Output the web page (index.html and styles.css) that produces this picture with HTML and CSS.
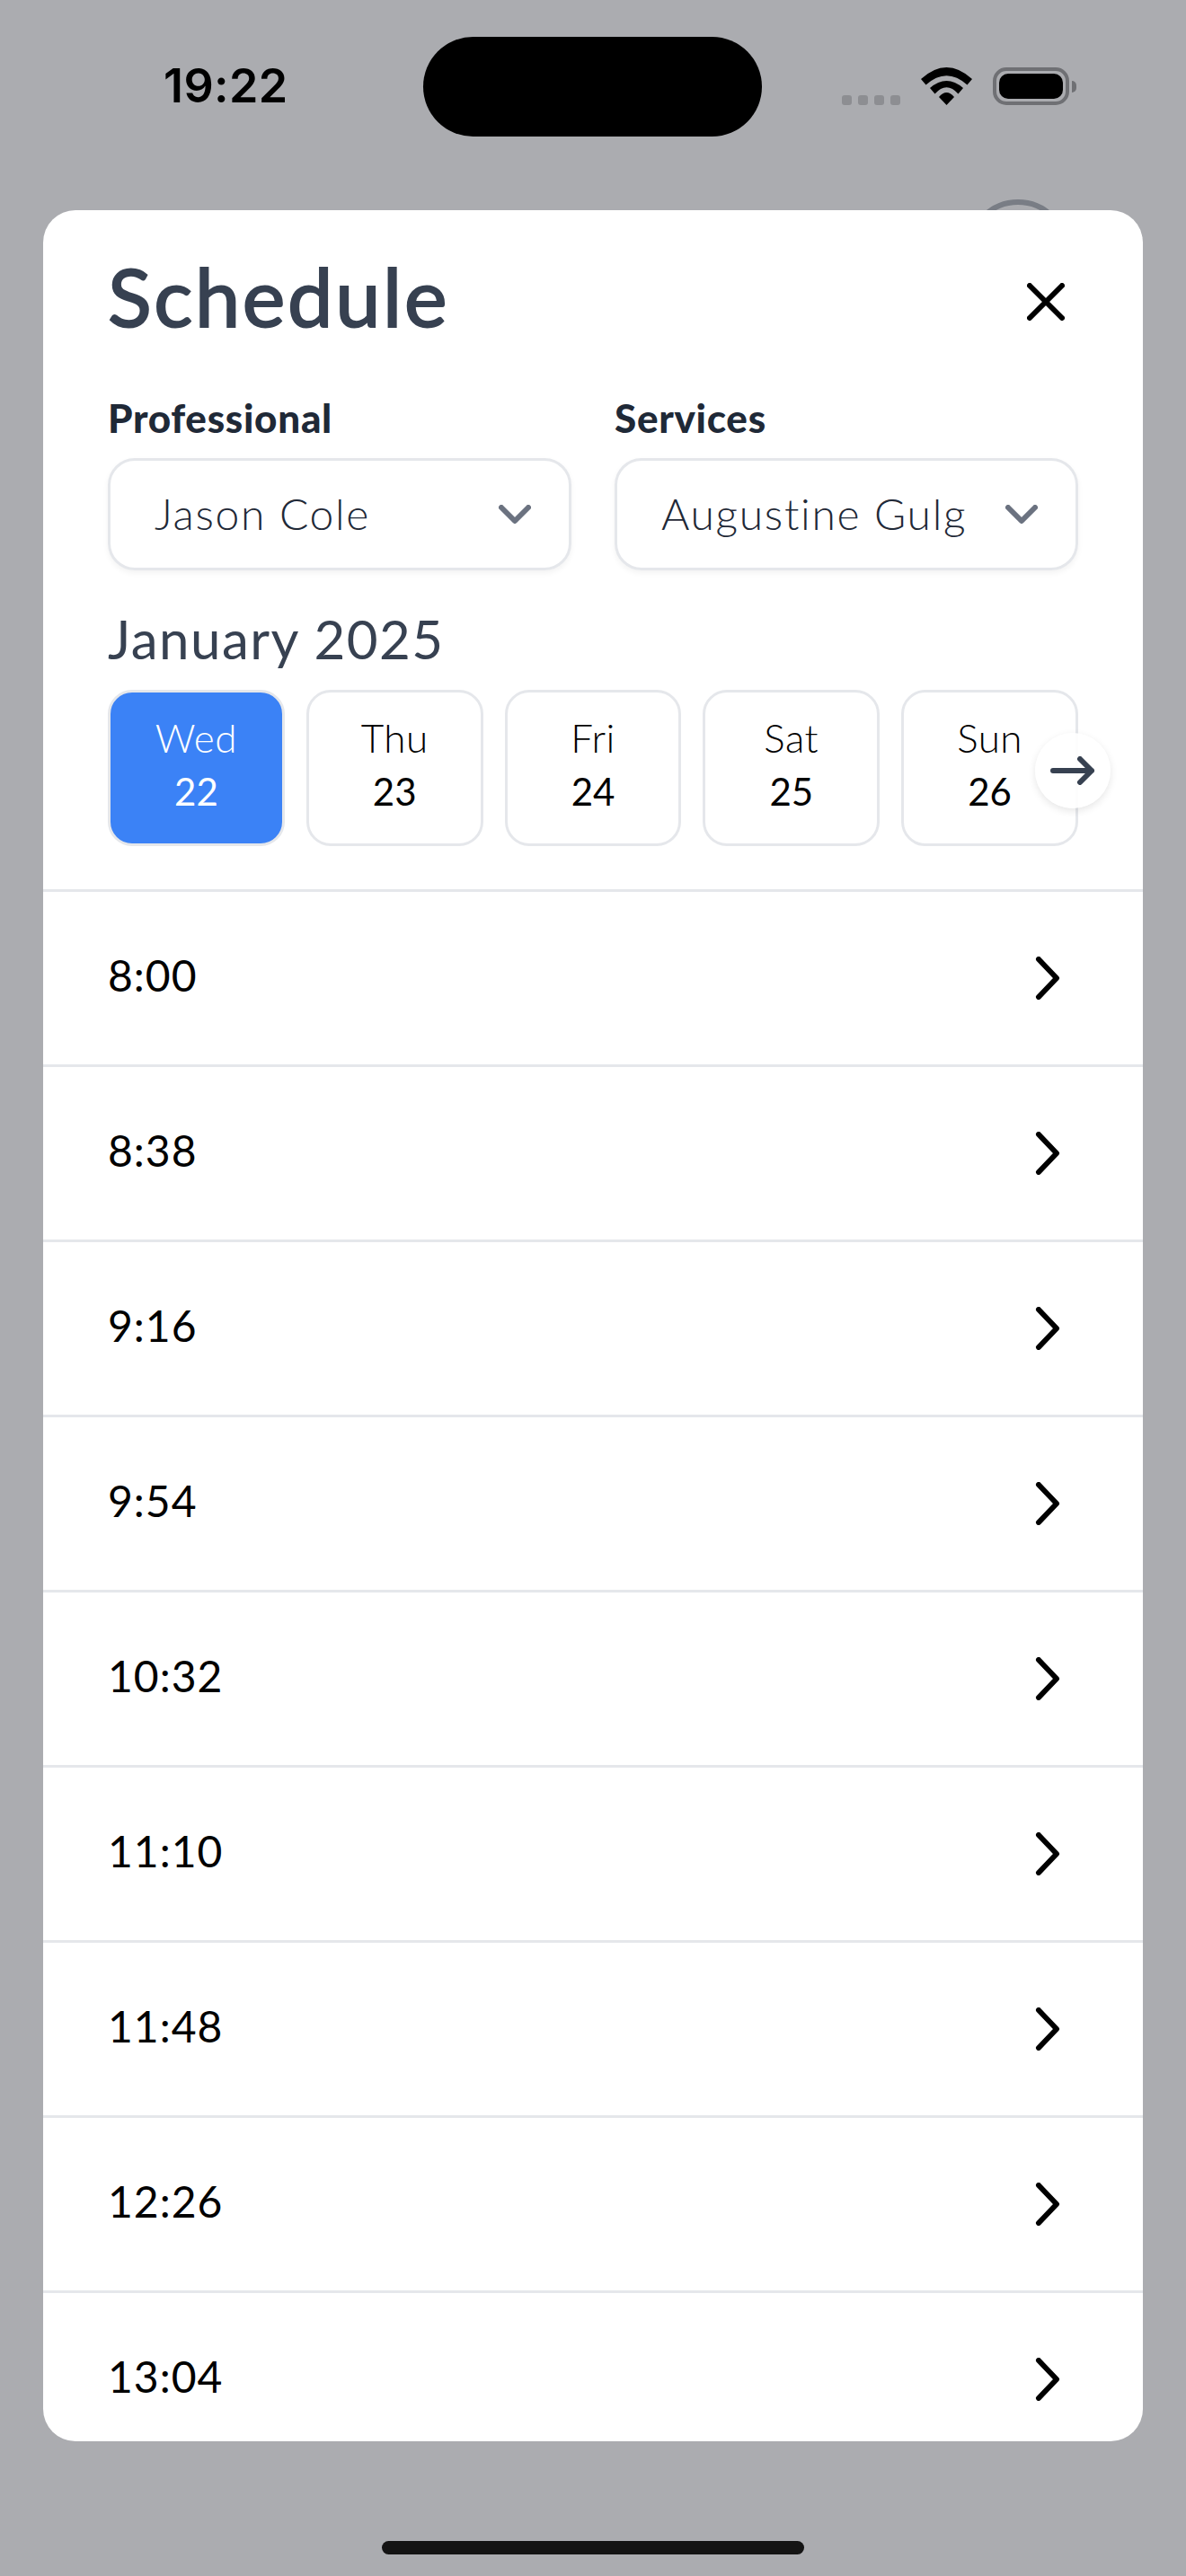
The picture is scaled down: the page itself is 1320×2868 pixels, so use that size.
FILE: index.html
```html
<!DOCTYPE html>
<html lang="en">
<head>
    <meta charset="UTF-8">
    <meta name="viewport" content="width=device-width, initial-scale=1.0">
    <title>Schedule</title>
    <link rel="stylesheet" href="styles.css">
</head>
<body>
    <div class="backdrop-ring"></div>

    <div class="status-bar">
        <span class="status-time">19:22</span>
        <div class="island"></div>
        <div class="status-icons">
            <div class="signal"><i></i><i></i><i></i><i></i></div>
            <svg class="wifi" width="57" height="42" viewBox="0 0 57 42">
                <path d="M0 13Q28.500 -13 57 13L51.500 19.500Q28.500 -1 5.500 19.500Z"/>
                <path d="M10 23Q28.500 7 47 23L41.500 29.500Q28.500 15 15.500 29.500Z"/>
                <path d="M28.500 42L20 33Q28.500 23 37 33Z"/>
            </svg>
            <div class="battery"><div class="battery-level"></div></div>
            <div class="battery-cap"></div>
        </div>
    </div>

    <div class="sheet">
        <div class="sheet-top">
            <div class="sheet-head">
                <h1>Schedule</h1>
                <svg class="close" width="42" height="42" viewBox="0 0 42 42"><path d="M3 3L39 39M39 3L3 39"/></svg>
            </div>

            <div class="filters">
                <div class="filter">
                    <label>Professional</label>
                    <div class="select">
                        <span>Jason Cole</span>
                        <svg width="36" height="22" viewBox="0 0 36 22"><path d="M3 3L18 18L33 3"/></svg>
                    </div>
                </div>
                <div class="filter">
                    <label>Services</label>
                    <div class="select">
                        <span>Augustine Gulg</span>
                        <svg width="36" height="22" viewBox="0 0 36 22"><path d="M3 3L18 18L33 3"/></svg>
                    </div>
                </div>
            </div>

            <h2>January 2025</h2>

            <div class="days">
                <div class="day active"><span>Wed</span><b>22</b></div>
                <div class="day"><span>Thu</span><b>23</b></div>
                <div class="day"><span>Fri</span><b>24</b></div>
                <div class="day"><span>Sat</span><b>25</b></div>
                <div class="day"><span>Sun</span><b>26</b></div>
                <div class="next">
                    <svg width="50" height="32" viewBox="0 0 50 32"><path d="M3 16H46M33 3L46 16L33 29"/></svg>
                </div>
            </div>
        </div>

        <div class="slots">
            <div class="slot"><span>8:00</span><svg width="28" height="48" viewBox="0 0 28 48"><path d="M4 3L24 24L4 45"/></svg></div>
            <div class="slot"><span>8:38</span><svg width="28" height="48" viewBox="0 0 28 48"><path d="M4 3L24 24L4 45"/></svg></div>
            <div class="slot"><span>9:16</span><svg width="28" height="48" viewBox="0 0 28 48"><path d="M4 3L24 24L4 45"/></svg></div>
            <div class="slot"><span>9:54</span><svg width="28" height="48" viewBox="0 0 28 48"><path d="M4 3L24 24L4 45"/></svg></div>
            <div class="slot"><span>10:32</span><svg width="28" height="48" viewBox="0 0 28 48"><path d="M4 3L24 24L4 45"/></svg></div>
            <div class="slot"><span>11:10</span><svg width="28" height="48" viewBox="0 0 28 48"><path d="M4 3L24 24L4 45"/></svg></div>
            <div class="slot"><span>11:48</span><svg width="28" height="48" viewBox="0 0 28 48"><path d="M4 3L24 24L4 45"/></svg></div>
            <div class="slot"><span>12:26</span><svg width="28" height="48" viewBox="0 0 28 48"><path d="M4 3L24 24L4 45"/></svg></div>
            <div class="slot"><span>13:04</span><svg width="28" height="48" viewBox="0 0 28 48"><path d="M4 3L24 24L4 45"/></svg></div>
        </div>
    </div>

    <div class="home-bar"></div>
</body>
</html>
```
FILE: styles.css
```css
body {
    margin: 0;
    height: 2868px;
    overflow: hidden;
    position: relative;
    background-color: #abacb0;
    font-family: 'Lato', 'Open Sans', sans-serif;
}
.backdrop-ring {
    position: absolute;
    left: 1076px;
    top: 222px;
    width: 102px;
    height: 102px;
    border: 6px solid #797d85;
    border-radius: 50%;
}
.status-bar {
    height: 234px;
    box-sizing: border-box;
    padding: 41px 0 0 182px;
    display: flex;
    align-items: flex-start;
    position: relative;
}
.status-time {
    width: 136px;
    margin: 29px 153px 0 0;
    font-family: 'Inter', sans-serif;
    font-size: 52px;
    font-weight: 600;
    line-height: 52px;
    letter-spacing: 0.4px;
    white-space: nowrap;
    color: #000;
}
.island {
    width: 377px;
    height: 111px;
    border-radius: 56px;
    background-color: #000;
}
.status-icons {
    margin: 34px 0 0 89px;
    display: flex;
    align-items: flex-start;
}
.signal {
    display: flex;
    gap: 7px;
    margin: 31px 23px 0 0;
}
.signal i {
    width: 11px;
    height: 11px;
    border-radius: 3px;
    background-color: #8d8e92;
}
.wifi {
    display: block;
    fill: #000;
}
.battery {
    width: 85px;
    height: 42px;
    box-sizing: border-box;
    margin-left: 23px;
    padding: 3px;
    border: 4px solid #6f7074;
    border-radius: 15px;
}
.battery-level {
    height: 100%;
    border-radius: 10px;
    background-color: #000;
}
.battery-cap {
    width: 5px;
    height: 13px;
    margin: 15px 0 0 3px;
    border-radius: 0 5px 5px 0;
    background-color: #6f7074;
}

.sheet {
    margin: 0 48px;
    height: 2484px;
    overflow: hidden;
    position: relative;
    border-radius: 36px;
    background-color: #fff;
}
.sheet-top {
    height: 756px;
    box-sizing: border-box;
    padding: 0 72px;
}
.sheet-head {
    display: flex;
    justify-content: space-between;
    height: 204px;
}
h1 {
    margin: 41px 0 0;
    font-size: 90px;
    font-weight: 400;
    line-height: 108px;
    letter-spacing: 2.7px;
    -webkit-text-stroke: 2px #374151;
    color: #374151;
}
.close {
    margin: 81px 15px 0 0;
    fill: none;
    stroke: #000;
    stroke-width: 6;
    stroke-linecap: round;
}
.filters {
    display: grid;
    grid-template-columns: 1fr 1fr;
    gap: 48px;
}
label {
    display: block;
    height: 72px;
    font-size: 44px;
    font-weight: 900;
    line-height: 54px;
    letter-spacing: 0.7px;
    color: #1f2937;
}
.select {
    height: 125px;
    box-sizing: border-box;
    padding: 0 42px 3px 49px;
    display: flex;
    align-items: center;
    justify-content: space-between;
    border: 3px solid #e5e7eb;
    border-radius: 30px;
    box-shadow: 0 3px 6px rgba(0, 0, 0, 0.05);
    font-size: 48px;
    font-weight: 300;
    letter-spacing: 1.7px;
    color: #1f2937;
}
.select svg {
    margin-top: 3px;
    fill: none;
    stroke: #6b7280;
    stroke-width: 6;
    stroke-linecap: round;
    stroke-linejoin: round;
}
h2 {
    margin: 40px 0 21px;
    font-size: 60px;
    font-weight: 400;
    line-height: 72px;
    letter-spacing: 1.5px;
    color: #374151;
}
.days {
    display: flex;
    gap: 24px;
    position: relative;
}
.day {
    flex: 1;
    height: 174px;
    box-sizing: border-box;
    padding-top: 23px;
    display: flex;
    flex-direction: column;
    align-items: center;
    border: 3px solid #e5e7eb;
    border-radius: 27px;
    color: #000;
}
.day span {
    font-size: 44px;
    font-weight: 300;
    line-height: 54px;
    letter-spacing: 0.5px;
}
.day b {
    font-size: 42px;
    font-weight: 400;
    line-height: 66px;
}
.day.active {
    background-color: #3b82f6;
    color: #fff;
}
.next {
    position: absolute;
    left: 1032px;
    top: 48px;
    width: 84px;
    height: 84px;
    display: flex;
    align-items: center;
    justify-content: center;
    border-radius: 50%;
    background-color: rgba(255, 255, 255, 0.9);
    box-shadow: 0 3px 9px rgba(0, 0, 0, 0.1);
}
.next svg {
    fill: none;
    stroke: #374151;
    stroke-width: 6;
    stroke-linecap: round;
    stroke-linejoin: round;
}
.slot {
    height: 195px;
    box-sizing: border-box;
    padding: 0 92px 0 72px;
    display: flex;
    align-items: center;
    justify-content: space-between;
    border-top: 3px solid #e5e7eb;
    font-size: 48px;
    letter-spacing: 1px;
    color: #000;
}
.slot span {
    margin-bottom: 7px;
}
.slot svg {
    fill: none;
    stroke: #000;
    stroke-width: 6;
    stroke-linecap: round;
    stroke-linejoin: round;
}
.home-bar {
    width: 470px;
    height: 15px;
    margin: 111px auto 0;
    border-radius: 8px;
    background-color: #141414;
}
```
